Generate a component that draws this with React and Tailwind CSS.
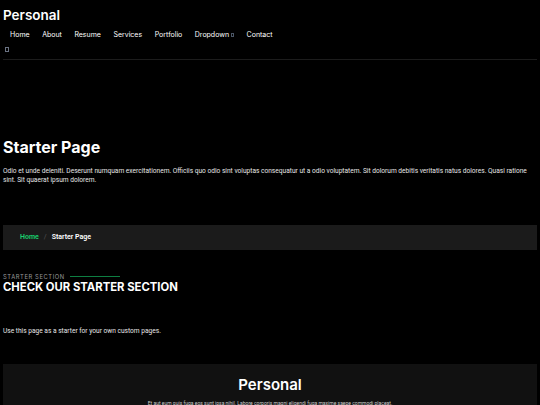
const navItems = ["Home", "About", "Resume", "Services", "Portfolio", "Dropdown", "Contact"];

const App = () => {
  return (
    <div className="min-h-[405px] bg-black text-white font-['Roboto',sans-serif] overflow-hidden">
      <header className="px-[3px]">
        <h1 className="pt-[6px] text-[13.5px] leading-[19px] font-semibold font-['Inter',sans-serif]">
          Personal
        </h1>
        <nav className="flex items-center gap-[12.5px] mt-[5px] pl-[7px] text-[7px] leading-[10px] font-['Inter',sans-serif] text-white">
          {navItems.map((item) => (
            <span key={item} className="flex items-center">
              {item}
              {item === "Dropdown" && <span className="ml-[2px] inline-block w-[3px] h-[4px] border-[0.5px] border-gray-600"></span>}
            </span>
          ))}
        </nav>
        <div className="mt-[7px] ml-[2px] w-[4px] h-[5px] border-[0.5px] border-gray-500"></div>
        <div className="mt-[7px] h-px bg-[#1c1c1c]"></div>
      </header>

      <section className="px-[3px] pt-[76px]">
        <h2 className="text-[16px] leading-[22px] font-bold font-['Inter',sans-serif]">Starter Page</h2>
        <p className="mt-[9px] text-[6.6px] leading-[9px] text-[#e6e6e6]">
          Odio et unde deleniti. Deserunt numquam exercitationem. Officiis quo odio sint voluptas consequatur ut a odio voluptatem. Sit dolorum debitis veritatis natus dolores. Quasi ratione sint. Sit quaerat ipsum dolorem.
        </p>
      </section>

      <div className="mx-[3px] mt-[40px] h-[25px] bg-[#1b1b1b] flex items-center pl-[17px] gap-[5px] text-[7px] font-semibold">
        <span className="text-[#18d26e]">Home</span>
        <span className="text-[#555] font-normal">/</span>
        <span className="text-white">Starter Page</span>
      </div>

      <section className="px-[3px] pt-[23px]">
        <div className="flex items-center gap-[5px] text-[5.8px] leading-[7px] tracking-[0.6px] text-[#999] font-['Inter',sans-serif]">
          STARTER SECTION
          <span className="w-[50px] h-px bg-[#18d26e] opacity-60"></span>
        </div>
        <h3 className="text-[11.3px] leading-[14px] font-bold font-['Inter',sans-serif]">CHECK OUR STARTER SECTION</h3>
        <p className="mt-[33px] text-[6.6px] leading-[9px] text-[#e6e6e6]">Use this page as a starter for your own custom pages.</p>
      </section>

      <footer className="mx-[3px] mt-[28px] bg-[#111111] pt-[10px] text-center">
        <h4 className="text-[15px] leading-[22px] font-semibold font-['Inter',sans-serif]">Personal</h4>
        <p className="mt-[4px] text-[5px] leading-[7px] text-[#ccc]">
          Et aut eum quis fuga eos sunt ipsa nihil. Labore corporis magni eligendi fuga maxime saepe commodi placeat.
        </p>
      </footer>
    </div>
  );
};

export default App;
